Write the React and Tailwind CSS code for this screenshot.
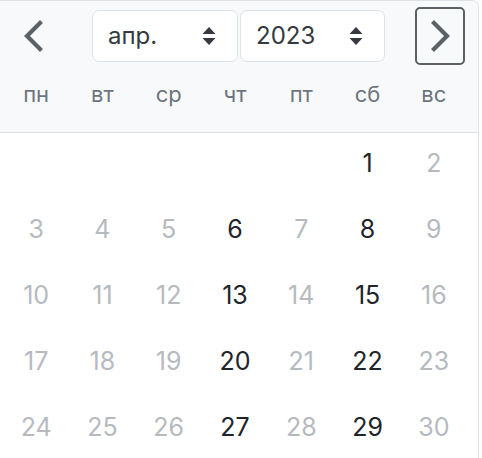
import React from 'react';

const weekdays = ['пн', 'вт', 'ср', 'чт', 'пт', 'сб', 'вс'];

// April 2023 starts on Saturday; only some days are selectable
const enabledDays = [1, 6, 8, 13, 15, 20, 22, 27, 29];

const SortArrows = () => (
    <svg width="14" height="20" viewBox="0 0 14 20" className="shrink-0">
        <path d="M7 1 L13.5 8 L0.5 8 Z" fill="#343a40" />
        <path d="M7 19 L13.5 12 L0.5 12 Z" fill="#343a40" />
    </svg>
);

const Chevron = ({ dir }) => (
    <svg width="22" height="32" viewBox="0 0 22 32">
        <path
            d={dir === 'left' ? 'M17 3 L4 16 L17 29' : 'M5 3 L18 16 L5 29'}
            fill="none"
            stroke="#5c6166"
            strokeWidth="4.2"
            strokeLinecap="square"
            strokeLinejoin="miter"
        />
    </svg>
);

const App = () => {
    const cells = [
        ...Array.from({ length: 5 }, () => null),
        ...Array.from({ length: 30 }, (_, i) => i + 1),
    ];

    return (
        <div
            className="w-[479px] h-[458px] overflow-hidden bg-white border-t border-r border-[#dee2e6] rounded-tr-[7px]"
            style={{ fontFamily: 'Inter, "Noto Sans", sans-serif' }}
        >
            {/* Header */}
            <div className="bg-[#f8f9fa] border-b border-[#dee2e6] pt-[6px]">
                <div className="flex items-center h-[58px]">
                    <button className="ml-[9px] w-[50px] h-[58px] flex items-center justify-center">
                        <Chevron dir="left" />
                    </button>
                    <div className="ml-[33px] w-[146px] h-[52px] bg-white border border-[#dee2e6] rounded-[7px] flex items-center justify-between pl-[15px] pr-[21px] text-[24px] text-[#343a40]">
                        <span>апр.</span>
                        <SortArrows />
                    </div>
                    <div className="ml-[2px] w-[145px] h-[52px] bg-white border border-[#dee2e6] rounded-[7px] flex items-center justify-between pl-[15px] pr-[21px] text-[24px] text-[#343a40]">
                        <span>2023</span>
                        <SortArrows />
                    </div>
                    <button className="ml-[30px] w-[50px] h-[58px] border-2 border-[#5c6166] rounded-[5px] flex items-center justify-center">
                        <Chevron dir="right" />
                    </button>
                </div>
                <div className="grid grid-cols-7 w-[464px] ml-[3px] h-[50px] mt-[4px] mb-[13px] items-center text-[22px] text-[#6c757d]">
                    {weekdays.map((d) => (
                        <div key={d} className="text-center">{d}</div>
                    ))}
                </div>
            </div>

            {/* Days */}
            <div className="grid grid-cols-7 w-[464px] ml-[3px] pt-[1px] gap-y-[6px]">
                {cells.map((day, idx) => (
                    <div
                        key={idx}
                        className={`h-[60px] flex items-center justify-center text-[25px] ${
                            day && enabledDays.includes(day) ? 'text-[#212529]' : 'text-[#b6babf]'
                        }`}
                    >
                        {day}
                    </div>
                ))}
            </div>
        </div>
    );
};

export default App;
